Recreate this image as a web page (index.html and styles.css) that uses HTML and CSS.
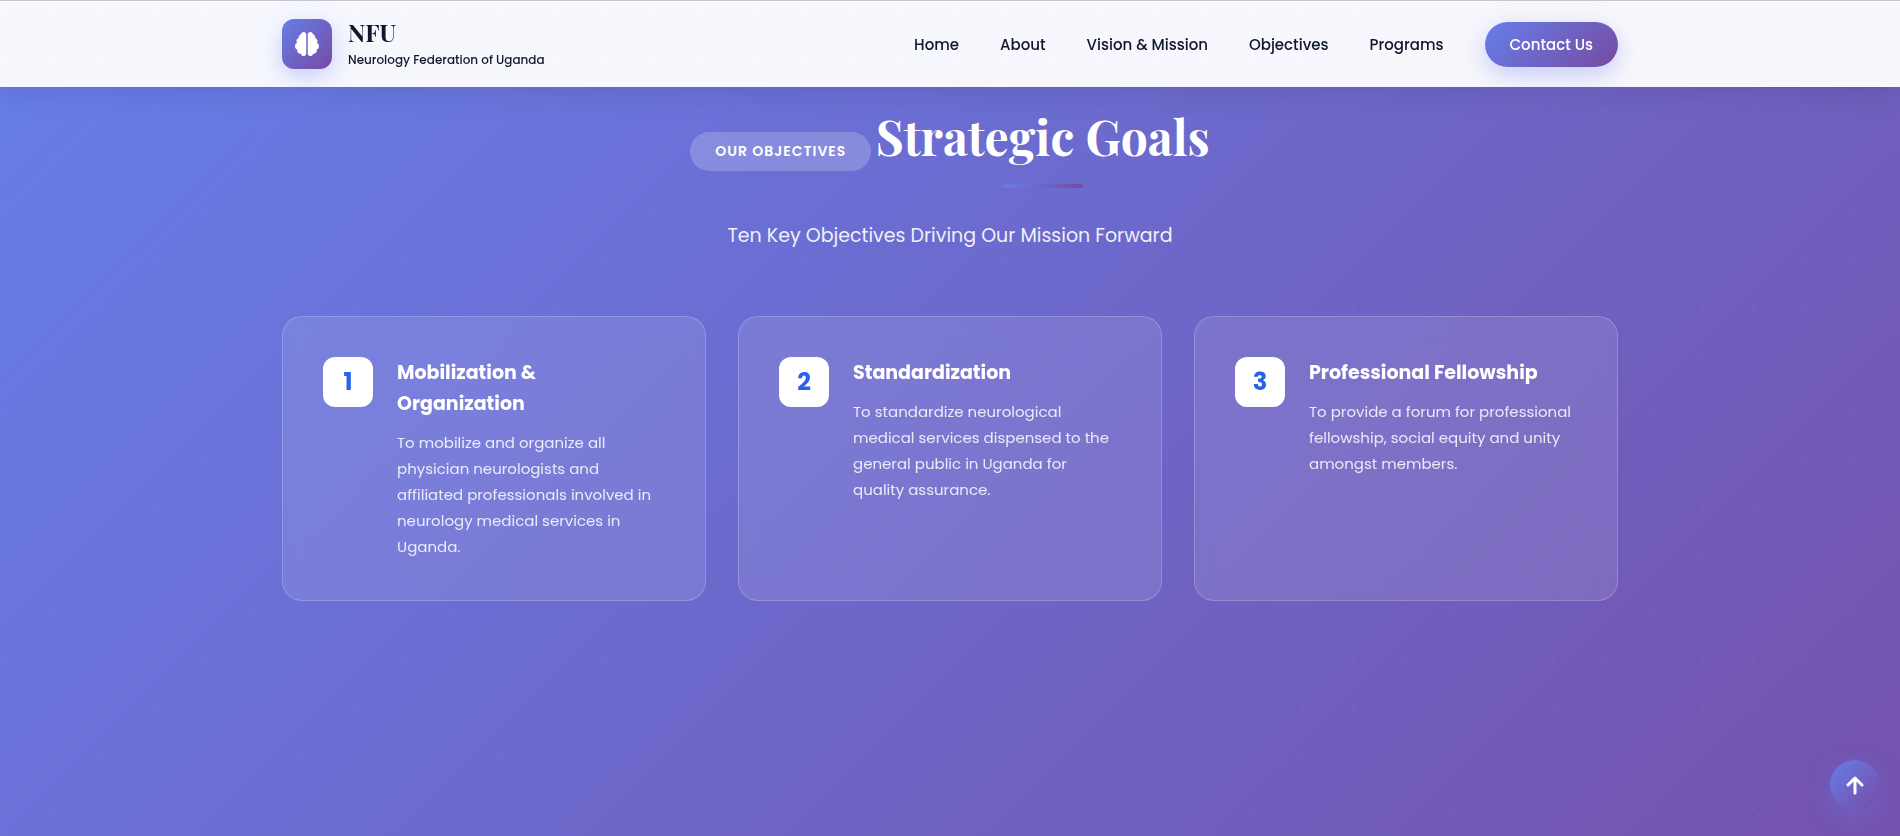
FILE: index.html
```html
<!DOCTYPE html>
<html lang="en">

<head>
    <meta charset="UTF-8">
    <meta name="viewport" content="width=device-width, initial-scale=1.0">
    <title>Neurology Federation of Uganda</title>
    <link rel="stylesheet" href="styles.css">
</head>

<body>

    <!-- Header -->
    <header class="header">
        <div class="container header-inner">
            <a href="#home" class="logo">
                <span class="logo-icon">
                    <svg viewBox="0 0 512 512" aria-hidden="true">
                        <path d="M184 0c30.900 0 56 25.100 56 56V456c0 30.900-25.100 56-56 56c-28.900 0-52.700-21.900-55.700-50.100c-5.200 1.400-10.700 2.100-16.300 2.100c-35.300 0-64-28.700-64-64c0-7.400 1.300-14.600 3.600-21.200C21.400 367.400 0 338.200 0 304c0-31.900 18.700-59.500 45.800-72.300C37.100 220.800 32 207 32 192c0-30.700 21.600-56.300 50.400-62.600C80.800 123.900 80 118 80 112c0-29.900 20.600-55.100 48.300-62.100C131.300 21.900 155.100 0 184 0zM328 0c28.900 0 52.600 21.900 55.700 49.900c27.800 7 48.300 32.100 48.300 62.100c0 6-.8 11.900-2.400 17.400c28.800 6.200 50.400 31.900 50.400 62.600c0 15-5.100 28.800-13.800 39.700C493.300 244.500 512 272.100 512 304c0 34.200-21.400 63.400-51.600 74.800c2.300 6.600 3.600 13.800 3.600 21.200c0 35.300-28.700 64-64 64c-5.600 0-11.100-.7-16.300-2.100c-3 28.200-26.800 50.100-55.700 50.100c-30.900 0-56-25.100-56-56V56c0-30.900 25.100-56 56-56z"/>
                    </svg>
                </span>
                <span class="logo-text">
                    <span class="logo-name">NFU</span>
                    <span class="logo-tagline">Neurology Federation of Uganda</span>
                </span>
            </a>
            <nav class="nav">
                <a href="#home">Home</a>
                <a href="#about">About</a>
                <a href="#vision">Vision &amp; Mission</a>
                <a href="#objectives">Objectives</a>
                <a href="#programs">Programs</a>
                <a href="#contact" class="nav-cta">Contact Us</a>
            </nav>
        </div>
    </header>

    <!-- Objectives -->
    <section class="objectives" id="objectives">
        <div class="container">
            <div class="section-header">
                <span class="section-badge">OUR OBJECTIVES</span>
                <h2 class="section-title">Strategic Goals</h2>
                <p class="section-subtitle">Ten Key Objectives Driving Our Mission Forward</p>
            </div>

            <div class="objectives-grid">
                <div class="objective-card">
                    <div class="objective-number">1</div>
                    <div class="objective-content">
                        <h3>Mobilization &amp; Organization</h3>
                        <p>To mobilize and organize all physician neurologists and affiliated professionals involved in neurology medical services in Uganda.</p>
                    </div>
                </div>
                <div class="objective-card">
                    <div class="objective-number">2</div>
                    <div class="objective-content">
                        <h3>Standardization</h3>
                        <p>To standardize neurological medical services dispensed to the general public in Uganda for quality assurance.</p>
                    </div>
                </div>
                <div class="objective-card">
                    <div class="objective-number">3</div>
                    <div class="objective-content">
                        <h3>Professional Fellowship</h3>
                        <p>To provide a forum for professional fellowship, social equity and unity amongst members.</p>
                    </div>
                </div>
            </div>
        </div>
    </section>

    <!-- Back to top -->
    <button type="button" class="back-to-top" aria-label="Back to top">
        <svg viewBox="0 0 20 20" aria-hidden="true">
            <path d="M10 18V3M3 10l7-7 7 7"/>
        </svg>
    </button>

</body>

</html>
```
FILE: styles.css
```css
:root {
    --primary: #2563eb;
    --dark: #0f172a;
    --gradient: linear-gradient(135deg, #667eea 0%, #764ba2 100%);
    --glow: 0 8px 24px rgba(102, 126, 234, 0.35);
}

* {
    margin: 0;
    padding: 0;
    box-sizing: border-box;
}

body {
    font-family: "Poppins", "Inter", sans-serif;
    line-height: 1.6;
    color: var(--dark);
}

a {
    color: inherit;
    text-decoration: none;
}

.container {
    width: 100%;
    max-width: 1400px;
    margin: 0 auto;
    padding: 0 32px;
}

/* Header */
.header {
    position: fixed;
    top: 0;
    left: 0;
    right: 0;
    z-index: 100;
    padding: 15px 0;
    background: rgba(255, 255, 255, 0.95);
    border-top: 1px solid #c8c8cc;
    box-shadow: 0 4px 30px rgba(0, 0, 0, 0.1);
}

.header-inner {
    display: flex;
    justify-content: space-between;
    align-items: center;
}

.logo {
    display: flex;
    align-items: center;
    gap: 16px;
}

.logo-icon {
    display: flex;
    align-items: center;
    justify-content: center;
    width: 50px;
    height: 50px;
    border-radius: 12px;
    background: var(--gradient);
    box-shadow: var(--glow);
}

.logo-icon svg {
    width: 24px;
    height: 24px;
    fill: white;
}

.logo-text {
    display: flex;
    flex-direction: column;
}

.logo-name {
    font-family: "Playfair Display", "Liberation Serif", serif;
    font-size: 24px;
    font-weight: bold;
    line-height: 32px;
}

.logo-tagline {
    font-size: 12px;
    font-weight: 500;
    line-height: 24px;
}

.nav {
    display: flex;
    align-items: center;
    gap: 41px;
    font-size: 15px;
    font-weight: 500;
    line-height: 25px;
}

.nav-cta {
    padding: 10px 25px;
    border-radius: 50px;
    color: white;
    background: var(--gradient);
    box-shadow: var(--glow);
}

/* Objectives */
.objectives {
    min-height: 100vh;
    padding: 96px 0;
    background:
        radial-gradient(circle at 3px 9px, rgba(255, 255, 255, 0.04) 1px, transparent 2px) 0 0 / 50px 50px,
        linear-gradient(135deg, #667eea 0%, #764ba2 100%) 0 0 / 100% 1300px;
}

.section-header {
    margin-bottom: 64px;
    text-align: center;
    color: white;
}

.section-badge {
    display: inline-block;
    padding: 8px 25px;
    border-radius: 50px;
    font-size: 14px;
    font-weight: 600;
    line-height: 23px;
    letter-spacing: 1px;
    background: rgba(255, 255, 255, 0.2);
}

.section-title {
    display: inline-block;
    position: relative;
    margin-bottom: 44px;
    font-family: "Playfair Display", "Liberation Serif", serif;
    font-size: 48px;
    font-weight: bold;
    line-height: 80px;
}

.section-title::after {
    content: "";
    position: absolute;
    left: 50%;
    bottom: -12px;
    width: 80px;
    height: 4px;
    margin-left: -40px;
    border-radius: 2px;
    background: var(--gradient);
}

.section-subtitle {
    font-size: 19px;
    line-height: 32px;
    opacity: 0.9;
}

.objectives-grid {
    display: grid;
    grid-template-columns: repeat(3, 1fr);
    gap: 32px;
}

.objective-card {
    display: flex;
    align-items: flex-start;
    gap: 24px;
    padding: 40px;
    border: 1px solid rgba(255, 255, 255, 0.2);
    border-radius: 20px;
    background: rgba(255, 255, 255, 0.1);
    backdrop-filter: blur(10px);
}

.objective-number {
    display: flex;
    flex-shrink: 0;
    align-items: center;
    justify-content: center;
    width: 50px;
    height: 50px;
    border-radius: 12px;
    font-size: 24px;
    font-weight: bold;
    color: var(--primary);
    background: white;
}

.objective-content h3 {
    margin-bottom: 11px;
    font-size: 19px;
    font-weight: bold;
    line-height: 31px;
    color: white;
}

.objective-content p {
    font-size: 15px;
    line-height: 26px;
    color: rgba(255, 255, 255, 0.85);
}

/* Back to top */
.back-to-top {
    position: fixed;
    right: 20px;
    bottom: 26px;
    display: flex;
    align-items: center;
    justify-content: center;
    width: 50px;
    height: 50px;
    border: none;
    border-radius: 50%;
    background: var(--gradient);
    box-shadow: var(--glow);
    cursor: pointer;
}

.back-to-top svg {
    width: 20px;
    height: 20px;
    fill: none;
    stroke: white;
    stroke-width: 3;
    stroke-linecap: round;
    stroke-linejoin: round;
}

/* Responsive */
@media screen and (max-width: 1100px) {
    .objectives-grid {
        grid-template-columns: 1fr;
    }

    .nav {
        gap: 20px;
    }
}
```
